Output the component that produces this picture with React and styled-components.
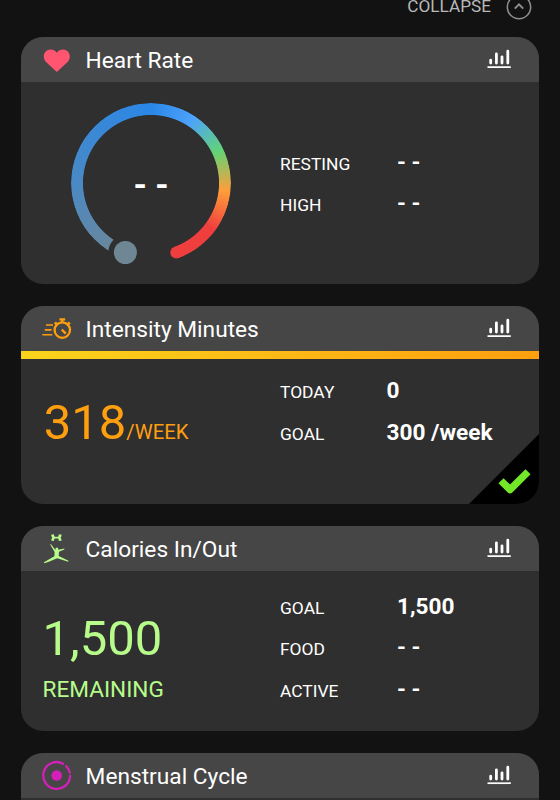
import React from "react";
import styled, { createGlobalStyle } from "styled-components";

const colors = {
  page: "#121212",
  header: "#464646",
  card: "#2f2f2f",
  orange: "#ff9f0f",
  green: "#b7fb8b",
  magenta: "#d41fb8",
  pink: "#ff5571",
};

const HeartIcon = () => (
  <IconSvg viewBox="0 0 30 45">
    <path
      d="M14.8 35 L4.3 25.2 C2.6 23.5 1.8 21.6 1.8 19.4 C1.8 15.5 4.7 12.5 8.6 12.5 C11 12.5 13.3 13.7 14.8 15.7 C16.3 13.7 18.6 12.5 21 12.5 C24.9 12.5 27.8 15.5 27.8 19.4 C27.8 21.6 27 23.5 25.3 25.2 Z"
      fill={colors.pink}
    />
  </IconSvg>
);

const StopwatchIcon = () => (
  <IconSvg viewBox="0 0 30 45">
    <g fill="none" stroke={colors.orange} strokeWidth="2.3">
      <circle cx="20.3" cy="24.1" r="7.7" />
      <path d="M17.4 13.3h5.8M20.3 13.3v3M12.7 18.2l2-2M27.9 18.2l-2-2" />
      <path d="M19.8 23.6l4 4" />
      <path d="M4 19h7M2.8 23.9h6.7M0.4 28.8h9.9" strokeWidth="1.6" />
    </g>
  </IconSvg>
);

const FitnessIcon = () => (
  <IconSvg viewBox="0 0 30 45">
    <g fill={colors.green}>
      <path d="M9.1 8.8 L12 8.3 Q12.1 10.4 12.7 10.8 H16.1 Q16.7 10.4 16.8 8.3 L19.7 8.8 Q19.6 10.4 18.6 11.7 Q19.6 13 19.7 14.6 L16.8 15.1 Q16.7 13 16.1 12.6 H12.7 Q12.1 13 12 15.1 L9.1 14.6 Q9.2 13 10.2 11.7 Q9.2 10.4 9.1 8.8 Z" />
      <circle cx="14.9" cy="22.9" r="1.5" />
      <path d="M8.8 18 L13.2 23.8 L16.5 23.8 L22.4 22.4 L22.3 23.4 L17 25.7 L16.7 30 L26.5 34.8 L26.2 35.7 L15.2 32.3 L6.2 36.1 L2.2 37.2 L2 36.2 L12.4 30.2 L12.6 26 L8.2 18.6 Z" />
    </g>
  </IconSvg>
);

const CycleIcon = () => (
  <IconSvg viewBox="0 0 30 45">
    <circle cx="14.7" cy="22.5" r="5.3" fill={colors.magenta} />
    <path
      d="M28.1 23A13.4 13.4 0 1 1 21.1 10.7M24.1 13A13.4 13.4 0 0 1 27.8 19.5"
      fill="none"
      stroke={colors.magenta}
      strokeWidth="2.3"
      strokeLinecap="round"
    />
  </IconSvg>
);

const ChartIcon = () => (
  <ChartSvg viewBox="0 0 24 20">
    <path
      d="M3.7 14V11.2M9.4 14V4.8M15 14V7.8M20.8 14V2.2"
      stroke="#fff"
      strokeWidth="2.8"
      strokeLinecap="round"
    />
    <path d="M0.5 18.2h23.3" stroke="#fff" strokeWidth="1.7" />
  </ChartSvg>
);

const CollapseIcon = () => (
  <CollapseSvg viewBox="0 0 26 26" fill="none" stroke="#8f8f8f">
    <circle cx="13" cy="13" r="11.7" strokeWidth="1.5" />
    <path d="M8.8 14.6l4.2-4.2 4.2 4.2" strokeWidth="2" />
  </CollapseSvg>
);

const Header = ({ icon, title }) => (
  <HeaderWrap>
    {icon}
    <Title>{title}</Title>
    <ChartIcon />
  </HeaderWrap>
);

const Stats = ({ rows, top, labelWidth }) => (
  <StatList $top={top}>
    {rows.map(([label, value]) => (
      <StatRow key={label} $labelWidth={labelWidth}>
        <Label>{label}</Label>
        <Value>{value}</Value>
      </StatRow>
    ))}
  </StatList>
);

const App = () => {
  return (
    <>
      <GlobalStyle />
      <Page>
        <Collapse>
          <span>COLLAPSE</span>
          <CollapseIcon />
        </Collapse>

        <Card $height={247.5}>
          <Header icon={<HeartIcon />} title="Heart Rate" />
          <Body>
            <Main>
              <Gauge>
                <Ring />
                <GaugeMarks viewBox="0 0 160 160">
                  <circle cx="54.4" cy="149.5" r="17.2" fill={colors.card} />
                  <circle cx="54.4" cy="149.5" r="11.5" fill="#6f8795" />
                  <circle cx="105.3" cy="149.5" r="6" fill="#ef3e3e" />
                </GaugeMarks>
                <GaugeText>- -</GaugeText>
              </Gauge>
            </Main>
            <Stats
              top={60.2}
              labelWidth={117}
              rows={[
                ["RESTING", "- -"],
                ["HIGH", "- -"],
              ]}
            />
          </Body>
        </Card>

        <Card $height={198.5}>
          <Header icon={<StopwatchIcon />} title="Intensity Minutes" />
          <Progress />
          <Body>
            <Main>
              <Amount $color={colors.orange} $top={35.3} $left={1.2}>
                318<Unit>/WEEK</Unit>
              </Amount>
            </Main>
            <Stats
              top={11.3}
              labelWidth={106.5}
              rows={[
                ["TODAY", "0"],
                ["GOAL", "300 /week"],
              ]}
            />
          </Body>
          <Corner viewBox="0 0 70 70">
            <path d="M70 0V70H0Z" fill="#000" />
            <path
              d="M32 46.8L41 55.6L59 37.8"
              fill="none"
              stroke="#73e829"
              strokeWidth="7.2"
              strokeLinejoin="round"
            />
          </Corner>
        </Card>

        <Card $height={205}>
          <Header icon={<FitnessIcon />} title="Calories In/Out" />
          <Body>
            <Main>
              <Amount $color={colors.green} $top={39}>
                1,500
              </Amount>
              <Remaining>REMAINING</Remaining>
            </Main>
            <Stats
              top={14.6}
              labelWidth={117}
              rows={[
                ["GOAL", "1,500"],
                ["FOOD", "- -"],
                ["ACTIVE", "- -"],
              ]}
            />
          </Body>
        </Card>

        <Card $height={200}>
          <Header icon={<CycleIcon />} title="Menstrual Cycle" />
        </Card>
      </Page>
    </>
  );
};

export default App;

const GlobalStyle = createGlobalStyle`
  * {
    box-sizing: border-box;
  }
  body {
    margin: 0;
    overflow: hidden;
    background: ${colors.page};
    font-family: Roboto, sans-serif;
    color: #fff;
  }
`;
const Page = styled.div`
  width: 560px;
  height: 800px;
  overflow: hidden;
  padding: 0 21px;
  display: flex;
  flex-direction: column;
  gap: 21.7px;
  background: ${colors.page};
`;
const Collapse = styled.div`
  height: 14.9px;
  margin-right: 7.5px;
  flex-shrink: 0;
  display: flex;
  align-items: flex-start;
  justify-content: flex-end;
  gap: 14.5px;
  font-size: 17.2px;
  line-height: 13px;
  color: #b9b9b9;
`;
const CollapseSvg = styled.svg`
  width: 26px;
  height: 26px;
  margin-top: -6.5px;
`;
const Card = styled.section`
  position: relative;
  flex-shrink: 0;
  height: ${({ $height }) => $height}px;
  overflow: hidden;
  border-radius: 22px;
  background: ${colors.card};
`;
const HeaderWrap = styled.header`
  height: 45px;
  padding: 0 28.5px 0 21px;
  display: flex;
  align-items: center;
  background: ${colors.header};
`;
const IconSvg = styled.svg`
  width: 30px;
  height: 45px;
`;
const Title = styled.h2`
  flex: 1;
  margin: 0 0 0 13.6px;
  padding-top: 3px;
  font-size: 22.7px;
  font-weight: 400;
  line-height: 43px;
`;
const ChartSvg = styled.svg`
  width: 24px;
  height: 20px;
`;
const Progress = styled.div`
  height: 8px;
  background: linear-gradient(90deg, #fad41c, #ff9f0f);
`;
const Body = styled.div`
  display: flex;
`;
const Main = styled.div`
  width: 259px;
  padding-left: 21.5px;
`;
const StatList = styled.div`
  padding-top: ${({ $top }) => $top}px;
`;
const StatRow = styled.div`
  height: 41.5px;
  display: grid;
  grid-template-columns: ${({ $labelWidth }) => $labelWidth}px auto;
  align-items: baseline;
  line-height: 41.5px;
`;
const Label = styled.span`
  font-size: 17.4px;
`;
const Value = styled.span`
  font-size: 22.6px;
  font-weight: 700;
`;
const Gauge = styled.div`
  position: relative;
  width: 160px;
  height: 160px;
  margin: 21.5px 0 0 28.5px;
  display: flex;
  align-items: center;
  justify-content: center;
`;
const Ring = styled.div`
  position: absolute;
  inset: 0;
  border-radius: 50%;
  background: conic-gradient(
    #2a87e6 0deg,
    #4ea3fb 33deg,
    #62d376 65deg,
    #ff9e3a 96deg,
    #ef3e3e 127deg,
    #ef3e3e 160deg,
    transparent 160deg,
    transparent 200deg,
    #6f8795 200deg,
    #4a89c5 270deg,
    #2a87e6 360deg
  );
  mask: radial-gradient(circle, transparent 67.6px, #000 68.4px);
`;
const GaugeMarks = styled.svg`
  position: absolute;
  inset: 0;
  overflow: visible;
`;
const GaugeText = styled.span`
  position: relative;
  padding-top: 2px;
  font-size: 34px;
  font-weight: 700;
  line-height: 40px;
`;
const Amount = styled.div`
  padding-top: ${({ $top }) => $top}px;
  padding-left: ${({ $left = 0 }) => $left}px;
  font-size: 49px;
  line-height: 58px;
  color: ${({ $color }) => $color};
`;
const Unit = styled.span`
  font-size: 20.3px;
`;
const Remaining = styled.div`
  padding-top: 7.7px;
  font-size: 22.6px;
  line-height: 28px;
  color: ${colors.green};
`;
const Corner = styled.svg`
  position: absolute;
  right: 0;
  bottom: 0;
  width: 70px;
  height: 70px;
`;
